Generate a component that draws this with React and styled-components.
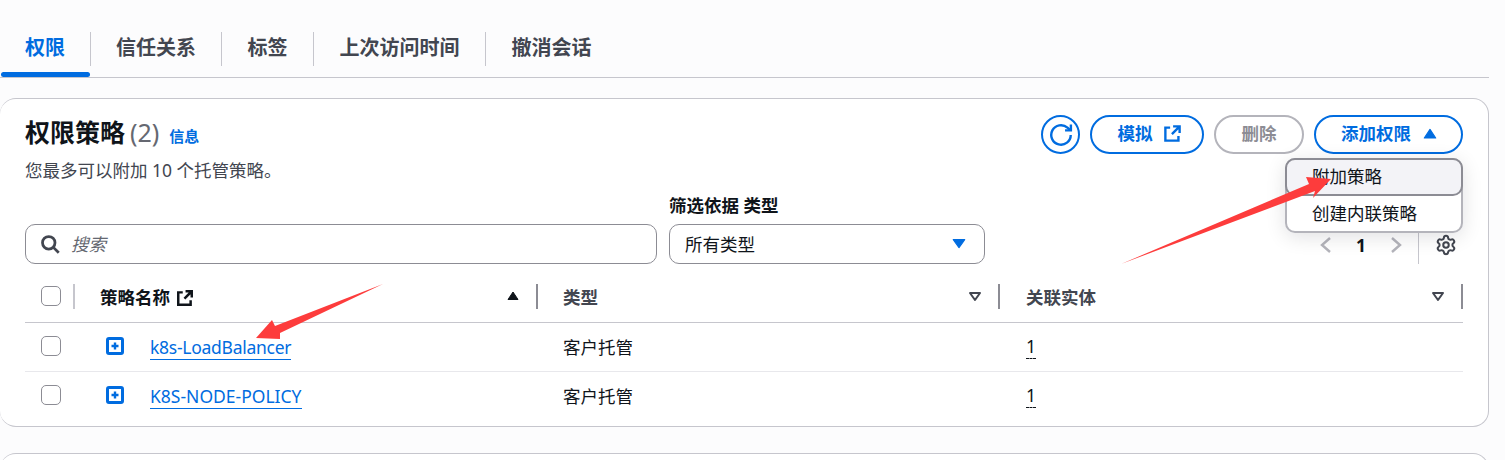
import React from 'react';
import styled, { createGlobalStyle } from 'styled-components';
import { Settings } from 'lucide-react';

const GlobalStyle = createGlobalStyle`
    html, body {
        margin: 0;
        height: 460px;
        overflow: hidden;
        background: #fcfcfd;
        font-family: "Noto Sans", "Noto Sans CJK SC", sans-serif;
        color: #0f141a;
    }
`

const Page = styled.div`
    position: relative;
    width: 1505px;
    height: 460px;
    overflow: hidden;
`
const Tabs = styled.div`
    display: flex;
    align-items: flex-start;
    width: 1489px;
    height: 78px;
    padding-top: 32px;
    box-sizing: border-box;
    border-bottom: 1px solid #c6c6cd;
`
const Tab = styled.div`
    position: relative;
    box-sizing: border-box;
    width: ${props => props.$width}px;
    height: 34px;
    line-height: 32px;
    text-align: center;
    font-size: 20px;
    font-weight: 700;
    color: ${props => props.$active ? '#006ce0' : '#424650'};
    border-right: ${props => props.$last ? 'none' : '1px solid #c6c6cd'};
    &::after {
        content: "";
        display: ${props => props.$active ? 'block' : 'none'};
        position: absolute;
        left: 1px;
        right: 0;
        top: 40px;
        height: 5px;
        border-radius: 3px;
        background: #006ce0;
    }
`
const Card = styled.div`
    box-sizing: border-box;
    width: 1489px;
    height: 329px;
    margin-top: 20px;
    padding: 14px 25px 0 25px;
    background: #fff;
    border: 1px solid #c6c6cd;
    border-left: none;
    border-radius: 16px;
`
const NextCard = styled(Card)`
    margin-top: 26px;
`
const HeaderRow = styled.div`
    display: flex;
    justify-content: space-between;
    align-items: flex-start;
    height: 79px;
`
const TitleLine = styled.div`
    display: flex;
    align-items: baseline;
    height: 38px;
    line-height: 38px;
`
const Title = styled.h2`
    margin: 0;
    font-size: 25px;
    font-weight: 700;
`
const Count = styled.span`
    margin-left: 5px;
    font-size: 25px;
    color: #656871;
`
const Info = styled.a`
    margin-left: 10px;
    font-size: 15px;
    font-weight: 700;
    color: #006ce0;
`
const Sub = styled.div`
    margin-top: 7px;
    font-size: 17.5px;
    line-height: 24px;
    color: #424650;
`
const Actions = styled.div`
    position: relative;
    display: flex;
    gap: 10px;
    align-items: center;
    margin-top: 2px;
`
const IconButton = styled.button`
    display: flex;
    align-items: center;
    justify-content: center;
    width: 39px;
    height: 39px;
    padding: 0;
    background: #fff;
    border: 2px solid #006ce0;
    border-radius: 50%;
    color: #006ce0;
`
const Button = styled.button`
    display: flex;
    align-items: center;
    justify-content: center;
    gap: ${props => props.$gap || 0}px;
    box-sizing: border-box;
    width: ${props => props.$width}px;
    height: 39px;
    padding: 0 0 5px ${props => props.$shift || 0}px;
    background: #fff;
    border: 2px solid ${props => props.disabled ? '#b4b4bb' : '#006ce0'};
    border-radius: 20px;
    font-family: inherit;
    font-size: 17.5px;
    font-weight: 700;
    color: ${props => props.disabled ? '#8c8c94' : '#006ce0'};
    svg {
        margin-top: 3px;
    }
`
const Menu = styled.div`
    position: absolute;
    top: 43px;
    right: 0;
    z-index: 2;
    box-sizing: border-box;
    width: 178px;
    height: 75px;
    background: #fff;
    border: 2px solid #b4b4bb;
    border-radius: 10px;
    box-shadow: 0 4px 20px rgba(0, 7, 22, 0.12);
    font-size: 17.5px;
`
const MenuItem = styled.div`
    box-sizing: border-box;
    height: ${props => props.$active ? 38 : 36}px;
    margin: ${props => props.$active ? '-2px -2px 0' : '0'};
    padding-left: 25px;
    line-height: ${props => props.$active ? 33 : 34}px;
    background: ${props => props.$active ? '#f3f3f7' : 'transparent'};
    border: ${props => props.$active ? '2px solid #8c8c94' : 'none'};
    border-radius: 10px;
    color: #0f141a;
`
const FilterRow = styled.div`
    display: flex;
    align-items: flex-end;
    gap: 12px;
    height: 70px;
    margin-top: 2px;
`
const SearchBox = styled.div`
    display: flex;
    align-items: center;
    box-sizing: border-box;
    width: 632px;
    height: 40px;
    padding-left: 14px;
    border: 1px solid #8c8c94;
    border-radius: 10px;
    font-size: 17.5px;
    font-style: italic;
    color: #656871;
`
const SearchText = styled.span`
    margin: 0 0 2px 11px;
`
const SelectField = styled.div`
    display: flex;
    flex-direction: column;
`
const SelectLabel = styled.label`
    margin-bottom: 7px;
    font-size: 17.5px;
    line-height: 24px;
    font-weight: 700;
`
const SelectBox = styled.div`
    display: flex;
    align-items: center;
    justify-content: space-between;
    box-sizing: border-box;
    width: 316px;
    height: 40px;
    padding: 0 17px 2px 15px;
    border: 1px solid #8c8c94;
    border-radius: 10px;
    font-size: 17.5px;
`
const Pager = styled.div`
    display: flex;
    align-items: center;
    height: 32px;
    margin-left: auto;
`
const PagerItem = styled.span`
    display: flex;
    margin-bottom: 6px;
`
const PagerNum = styled.span`
    width: 56px;
    margin-bottom: 6px;
    text-align: center;
    font-size: 17.5px;
    font-weight: 700;
`
const Gear = styled.div`
    display: flex;
    align-items: center;
    justify-content: flex-end;
    box-sizing: border-box;
    width: 45px;
    height: 32px;
    margin-left: 15px;
    padding: 0 6px 6px 0;
    border-left: 1px solid #c6c6cd;
    color: #424650;
`
const Table = styled.div`
    margin-top: 6px;
    width: 1438px;
`
const Row = styled.div`
    display: grid;
    grid-template-columns: 50px 463px 462px 463px;
    align-items: center;
    box-sizing: border-box;
    height: ${props => props.$height}px;
    padding-bottom: ${props => props.$bottom || 0}px;
    border-bottom: ${props => props.$line || 'none'};
    font-size: 17.5px;
`
const HeadCell = styled.div`
    display: flex;
    align-items: center;
    justify-content: space-between;
    box-sizing: border-box;
    height: 25px;
    padding: 0 16px 0 ${props => props.$left}px;
    border-right: 2px solid #8c8c94;
    font-weight: 700;
    color: ${props => props.$active ? '#0f141a' : '#424650'};
`
const HeadLabel = styled.span`
    display: flex;
    align-items: center;
    gap: 6px;
    svg {
        margin-top: 3px;
    }
`
const CheckCell = styled.div`
    display: flex;
    align-items: center;
    box-sizing: border-box;
    height: 25px;
    padding-left: 16px;
    border-right: ${props => props.$divider ? '2px solid #c6c6cd' : 'none'};
`
const Checkbox = styled.span`
    display: block;
    box-sizing: border-box;
    width: 20px;
    height: 20px;
    border: 1px solid #8c8c94;
    border-radius: 5px;
`
const NameCell = styled.div`
    display: flex;
    align-items: center;
    gap: 25px;
    padding-left: 30px;
`
const PolicyLink = styled.a`
    margin-top: 3px;
    color: #006ce0;
    line-height: 23px;
    letter-spacing: ${props => props.$tight ? '-0.27px' : '0'};
    border-bottom: 1px solid #006ce0;
`
const TextCell = styled.div`
    padding-left: ${props => props.$left}px;
`
const DashedNum = styled.span`
    display: inline-block;
    width: 10px;
    line-height: 23px;
    border-bottom: 1px dashed #0f141a;
`
const Annotations = styled.svg`
    position: absolute;
    left: 0;
    top: 0;
    z-index: 3;
    pointer-events: none;
`

const Caret = ({ down, outline, color, size = 14 }) => (
    <svg width={size} height={size} viewBox="0 0 14 14">
        <path
            d={down ? "M2 4h10l-5 7z" : "M7 3l5 7.5H2z"}
            fill={outline ? 'none' : color}
            stroke={color}
            strokeWidth={outline ? 2 : 1}
            strokeLinejoin="round"
        />
    </svg>
);

const External = ({ size = 19, weight = 2 }) => (
    <svg width={size} height={size} viewBox="0 0 16 16" fill="none" stroke="currentColor" strokeWidth={weight}>
        <path d="M14 7.5V2H8.5M14 2L7.5 8.5M6 3H2v11h11v-4" />
    </svg>
);

const Refresh = () => (
    <svg width="24" height="24" viewBox="0 0 16 16" fill="none" stroke="currentColor" strokeWidth="1.6">
        <path d="M14.5 8a6.5 6.5 0 1 1-2.2-4.9L14 4.6" />
        <path d="M14.6 1v3.9h-3.9" />
    </svg>
);

const SearchIcon = () => (
    <svg width="20" height="20" viewBox="0 0 16 16" fill="none" stroke="#424650" strokeWidth="2.2">
        <circle cx="7" cy="7" r="5" />
        <path d="M10.5 10.5L15 15" />
    </svg>
);

const Chevron = ({ right }) => (
    <svg width="14" height="20" viewBox="0 0 14 20" fill="none" stroke="#b4b4bb" strokeWidth="2.4">
        <path d={right ? "M3 3l8 7-8 7" : "M11 3l-8 7 8 7"} />
    </svg>
);

const ExpandIcon = () => (
    <svg width="20" height="20" viewBox="0 0 20 20">
        <rect x="2.5" y="2.5" width="15" height="15" rx="1.5" fill="none" stroke="#006ce0" strokeWidth="3" />
        <path d="M10 6.5v7M6.5 10h7" stroke="#006ce0" strokeWidth="2.4" />
    </svg>
);

const policies = [
    { name: "k8s-LoadBalancer", tight: true },
    { name: "K8S-NODE-POLICY", tight: false },
];

const App = () => {
    return (
        <Page>
            <GlobalStyle />
            <Tabs>
                <Tab $width={91} $active>权限</Tab>
                <Tab $width={131}>信任关系</Tab>
                <Tab $width={92}>标签</Tab>
                <Tab $width={172}>上次访问时间</Tab>
                <Tab $width={131} $last>撤消会话</Tab>
            </Tabs>
            <Card>
                <HeaderRow>
                    <div>
                        <TitleLine>
                            <Title>权限策略</Title>
                            <Count>(2)</Count>
                            <Info>信息</Info>
                        </TitleLine>
                        <Sub>您最多可以附加 10 个托管策略。</Sub>
                    </div>
                    <Actions>
                        <IconButton><Refresh /></IconButton>
                        <Button $width={114} $gap={10} $shift={5}>模拟 <External /></Button>
                        <Button $width={90} disabled>删除</Button>
                        <Button $width={149} $gap={11} $shift={2}>添加权限 <Caret color="#006ce0" size={16} /></Button>
                        <Menu>
                            <MenuItem $active>附加策略</MenuItem>
                            <MenuItem>创建内联策略</MenuItem>
                        </Menu>
                    </Actions>
                </HeaderRow>
                <FilterRow>
                    <SearchBox>
                        <SearchIcon />
                        <SearchText>搜索</SearchText>
                    </SearchBox>
                    <SelectField>
                        <SelectLabel>筛选依据 类型</SelectLabel>
                        <SelectBox>
                            所有类型
                            <Caret down color="#006ce0" size={16} />
                        </SelectBox>
                    </SelectField>
                    <Pager>
                        <PagerItem><Chevron /></PagerItem>
                        <PagerNum>1</PagerNum>
                        <PagerItem><Chevron right /></PagerItem>
                        <Gear><Settings size={22} strokeWidth={2.2} /></Gear>
                    </Pager>
                </FilterRow>
                <Table>
                    <Row $height={53} $line="1px solid #c6c6cd">
                        <CheckCell $divider><Checkbox /></CheckCell>
                        <HeadCell $active $left={25}>
                            <HeadLabel>策略名称 <External size={18} weight={2.2} /></HeadLabel>
                            <Caret color="#0f141a" />
                        </HeadCell>
                        <HeadCell $left={25}>
                            <HeadLabel>类型</HeadLabel>
                            <Caret down outline color="#424650" />
                        </HeadCell>
                        <HeadCell $left={26}>
                            <HeadLabel>关联实体</HeadLabel>
                            <Caret down outline color="#424650" />
                        </HeadCell>
                    </Row>
                    {policies.map((policy, i) => (
                        <Row
                            key={policy.name}
                            $height={i === 0 ? 49 : 46}
                            $bottom={i === 0 ? 2 : 0}
                            $line={i === 0 ? '1px solid #e8e8ec' : 'none'}
                        >
                            <CheckCell><Checkbox /></CheckCell>
                            <NameCell>
                                <ExpandIcon />
                                <PolicyLink $tight={policy.tight}>{policy.name}</PolicyLink>
                            </NameCell>
                            <TextCell $left={25}>客户托管</TextCell>
                            <TextCell $left={26}><DashedNum>1</DashedNum></TextCell>
                        </Row>
                    ))}
                </Table>
            </Card>
            <NextCard />
            <Annotations width="1505" height="460" viewBox="0 0 1505 460">
                <polygon fill="#fd3c3c" points="1121,264 1309,184 1306,177 1331,179 1313,198 1315,191" />
                <polygon fill="#fd3c3c" points="383,284 275,326 272,320 256,338 280,339 280,333" />
            </Annotations>
        </Page>
    );
}

export default App;
